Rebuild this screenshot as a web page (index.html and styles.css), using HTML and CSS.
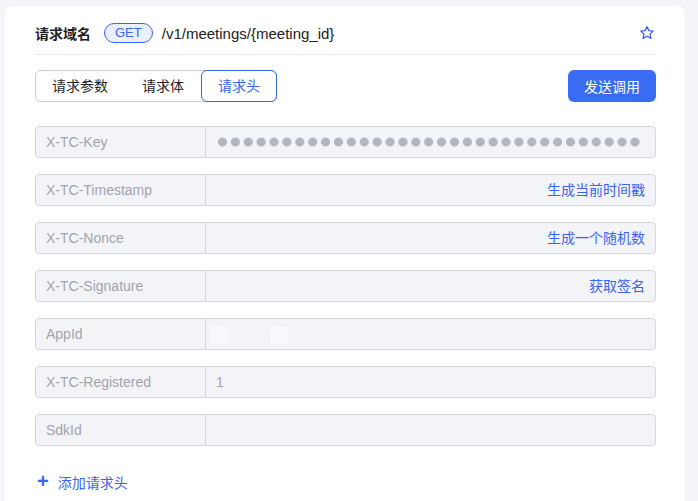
FILE: index.html
```html
<!DOCTYPE html>
<html lang="zh-CN">
<head>
    <meta charset="UTF-8">
    <title>请求头</title>
    <link rel="stylesheet" href="styles.css">
</head>
<body>

<div class="card">

    <!-- 请求域名 -->
    <div class="domain">
        <span class="domain-title">请求域名</span>
        <span class="method">GET</span>
        <span class="path">/v1/meetings/{meeting_id}</span>
        <svg class="star" width="16" height="16" viewBox="0 0 16 16">
            <path d="M8 1.6l1.9 4 4.3.5-3.2 3 .9 4.3L8 11.3l-3.9 2.1.9-4.3-3.2-3 4.3-.5z" fill="none" stroke="#3a64f0" stroke-width="1.3" stroke-linejoin="round"/>
        </svg>
    </div>

    <!-- 标签页 -->
    <div class="toolbar">
        <div class="tabs">
            <span class="tab">请求参数</span>
            <span class="tab">请求体</span>
            <span class="tab active">请求头</span>
        </div>
        <button class="send">发送调用</button>
    </div>

    <!-- 请求头列表 -->
    <div class="rows">
        <div class="row">
            <div class="key">X-TC-Key</div>
            <div class="val"><span class="secret"></span></div>
        </div>
        <div class="row">
            <div class="key">X-TC-Timestamp</div>
            <div class="val"><span class="action">生成当前时间戳</span></div>
        </div>
        <div class="row">
            <div class="key">X-TC-Nonce</div>
            <div class="val"><span class="action">生成一个随机数</span></div>
        </div>
        <div class="row">
            <div class="key">X-TC-Signature</div>
            <div class="val"><span class="action">获取签名</span></div>
        </div>
        <div class="row">
            <div class="key">AppId</div>
            <div class="val"><span class="mask"></span><span class="mask"></span></div>
        </div>
        <div class="row">
            <div class="key">X-TC-Registered</div>
            <div class="val">1</div>
        </div>
        <div class="row">
            <div class="key">SdkId</div>
            <div class="val"></div>
        </div>
    </div>

    <div class="add">
        <span class="plus">+</span>
        <span>添加请求头</span>
    </div>

</div>

</body>
</html>
```

FILE: styles.css
```css
body {
    font-family: "Liberation Sans", "Noto Sans CJK SC", sans-serif;
    background-color: #f4f5f9;
    color: #1f2329;
    margin: 0;
    padding: 0;
    font-size: 14px;
}
.card {
    background-color: #fff;
    margin: 6px 13px 0 5px;
    padding: 12px 29px 20px 30px;
    border-radius: 8px;
    height: 600px;
}
.domain {
    display: flex;
    align-items: center;
    height: 30px;
    padding-bottom: 6px;
    border-bottom: 1px solid #e8e9ee;
}
.domain-title {
    font-weight: 600;
    font-size: 14px;
}
.method {
    margin-left: 13px;
    height: 18px;
    line-height: 18px;
    padding: 0 10px;
    border: 1px solid #3a64f0;
    border-radius: 10px;
    background-color: #e9efff;
    color: #3a64f0;
    font-size: 13px;
}
.path {
    margin-left: 9px;
    color: #222;
    font-size: 15px;
}
.star {
    margin-left: auto;
    margin-right: 1px;
}
.toolbar {
    display: flex;
    justify-content: space-between;
    margin-top: 15px;
}
.tabs {
    display: flex;
    border: 1px solid #c9ccd4;
    border-radius: 6px;
    height: 30px;
}
.tab {
    padding: 0 17px;
    line-height: 30px;
    color: #1f2329;
}
.tab:first-child {
    padding-left: 16px;
}
.tab.active {
    color: #3a64f0;
    border: 1px solid #3a64f0;
    border-radius: 6px;
    margin: -1px -1px -1px 0;
    padding: 0 16px;
}
.send {
    width: 88px;
    height: 32px;
    border: none;
    border-radius: 6px;
    background-color: #3a6bf4;
    color: #fff;
    font-family: inherit;
    font-size: 14px;
}
.rows {
    display: flex;
    flex-direction: column;
    gap: 16px;
    margin-top: 24px;
}
.row {
    display: flex;
    height: 30px;
    border: 1px solid #d4d6dd;
    border-radius: 4px;
    background-color: #f3f4f7;
    line-height: 30px;
}
.key {
    flex-shrink: 0;
    width: 159px;
    padding-left: 10px;
    border-right: 1px solid #d4d6dd;
    color: #a0a4ad;
}
.val {
    flex: 1;
    min-width: 0;
    display: flex;
    padding: 0 10px;
    color: #a0a4ad;
}
.action {
    margin-left: auto;
    color: #3a64f0;
}
/* 密码圆点 */
.secret {
    width: 426px;
    height: 10px;
    margin-top: 10px;
    background-image: radial-gradient(circle, #b3b6bf 4.2px, transparent 4.8px);
    background-size: 12.9px 10px;
}
.mask {
    width: 18px;
    height: 18px;
    margin-top: 7px;
    margin-right: 42px;
    background-color: #f8f9fb;
    border-radius: 2px;
}
.mask:first-child {
    margin-left: -6px;
}
.add {
    display: flex;
    align-items: center;
    gap: 9px;
    margin-top: 24px;
    color: #3a64f0;
}
.plus {
    font-size: 20px;
    font-weight: bold;
    margin-left: 2px;
}
```
